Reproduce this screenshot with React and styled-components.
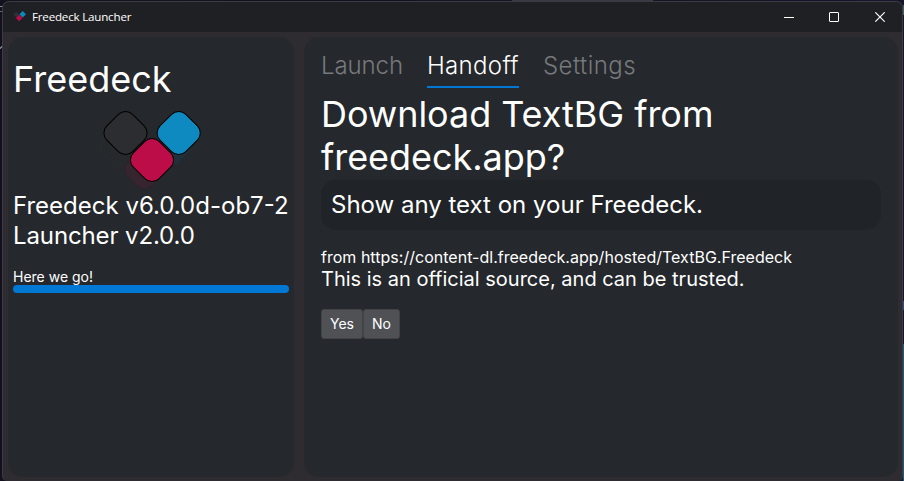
import React from "react";
import styled, { createGlobalStyle } from "styled-components";

const GlobalStyle = createGlobalStyle`
  *, *::before, *::after { box-sizing: border-box; }
  html, body { margin: 0; height: 100%; overflow: hidden; background: #15131f; }
  #root { height: 100%; }
`;

const Desktop = styled.div`
  width: 904px;
  height: 481px;
  padding: 1px 1px 0 2px;
  background:
    linear-gradient(#3a3a44, #3a3a44) 512px 0 / 141px 1px no-repeat,
    linear-gradient(#8d8c98, #8d8c98) 0 6px / 3px 1px no-repeat,
    linear-gradient(#6b6a76, #6b6a76) 0 11px / 3px 1px no-repeat,
    linear-gradient(135deg, transparent 40%, #77808c 40% 65%, transparent 65%) 0 45px / 3px 4px no-repeat,
    linear-gradient(#3e5f62, #3e5f62) 903px 5px / 1px 10px no-repeat,
    linear-gradient(#2f4a78, #2f4a78) 903px 301px / 1px 9px no-repeat,
    linear-gradient(#1c5a74, #1c5a74) 903px 344px / 1px 137px no-repeat,
    linear-gradient(90deg, #12111d 0, #17152a 100%);
`;

const Window = styled.div`
  display: flex;
  flex-direction: column;
  height: 480px;
  border: 1px solid #3c3b42;
  border-bottom-width: 0;
  border-radius: 7px 7px 5px 5px;
  overflow: hidden;
  background: #2e2c31;
  color: #fff;
  font-family: Inter, sans-serif;
`;

const TitleBar = styled.header`
  display: flex;
  align-items: center;
  flex: 0 0 30px;
  padding-left: 10px;
  background: #1f2023;
`;

const TitleText = styled.span`
  flex: 1;
  margin-left: 5px;
  font: 11.6px/16px "Open Sans", sans-serif;
  letter-spacing: -0.2px;
  white-space: nowrap;
`;

const WindowButton = styled.button`
  display: flex;
  align-items: center;
  justify-content: center;
  width: ${(p) => p.$width || 45}px;
  height: 30px;
  padding: 0;
  border: 0;
  background: none;
  color: #fff;
`;

const Body = styled.main`
  display: grid;
  grid-template-columns: 286px 594px;
  gap: 10px;
  padding: 5px 5px 0;
  height: 445px;
`;

const Panel = styled.section`
  display: flex;
  flex-direction: column;
  height: 440px;
  border-radius: 15px;
  background: #25282c;
  padding: ${(p) => p.$padding};
`;

const Heading = styled.h1`
  margin: ${(p) => p.$top || 0}px 0 0;
  font-size: 36px;
  line-height: 43px;
  font-weight: 400;
  letter-spacing: ${(p) => p.$tracking || 0}px;
`;

const Logo = styled.svg`
  display: block;
  margin: 5px 0 0 87px;
`;

const Versions = styled.div`
  margin-top: -1px;
  font-size: 24px;
  line-height: 30px;
  white-space: nowrap;
`;

const VersionLine = styled.div`
  letter-spacing: ${(p) => p.$tracking || 0}px;
`;

const Status = styled.div`
  margin-top: 17px;
  font-size: 14px;
  line-height: 17px;
`;

const Progress = styled.div`
  height: 8px;
  border-radius: 4px;
  background: #0078d4;
`;

const Tabs = styled.nav`
  display: flex;
  gap: 24px;
  height: 43px;
  margin-top: 8px;
`;

const Tab = styled.a`
  height: 43px;
  border-bottom: 2px solid ${(p) => (p.$active ? "#0078d4" : "transparent")};
  color: ${(p) => (p.$active ? "#fff" : "#77797c")};
  font-size: 24px;
  line-height: 41px;
  font-weight: 300;
  letter-spacing: ${(p) => p.$tracking || 0}px;
  white-space: nowrap;
`;

const Description = styled.div`
  height: 50px;
  margin-top: 1px;
  padding: 0 10px;
  border-radius: 15px;
  background: #202327;
  font-size: 24px;
  line-height: 50px;
`;

const Source = styled.div`
  margin-top: 17px;
  font-size: 16px;
  line-height: 20px;
  letter-spacing: 0.02px;
`;

const Trust = styled.div`
  font-size: 20px;
  line-height: 24px;
`;

const Actions = styled.div`
  display: flex;
  margin-top: 18px;
`;

const ActionButton = styled.button`
  width: ${(p) => p.$width}px;
  height: 30px;
  padding: 0;
  border: 1px solid #414347;
  border-radius: 3px;
  background: #505155;
  color: #fff;
  font: 14px/28px Inter, sans-serif;
`;

const Diamond = ({ x, y, half = 18.2, ...rest }) => (
  <rect x={x - half} y={y - half} width={half * 2} height={half * 2} rx="10"
    transform={`rotate(45 ${x} ${y})`} {...rest} />
);

const MiniLogo = () => (
  <svg width="14" height="14" viewBox="0 0 14 14">
    <path d="M3.3 1.8 6.1 4.6 3.3 7.4.5 4.6Z" fill="#303136" />
    <path d="M9.7 1.3 12.7 4.3 9.7 7.3 6.7 4.3Z" fill="#0f8ac0" stroke="#0f8ac0" strokeWidth=".5" />
    <path d="M6.2 4.9 9.2 7.9 6.2 10.9 3.2 7.9Z" fill="#bd0d49" stroke="#bd0d49" strokeWidth=".5" />
  </svg>
);

export default function App() {
  return (
    <>
      <GlobalStyle />
      <Desktop>
        <Window>
          <TitleBar>
            <MiniLogo />
            <TitleText>Freedeck Launcher</TitleText>
            <WindowButton aria-label="Minimize">
              <svg width="10" height="10"><path d="M0 5.5H10" stroke="currentColor" /></svg>
            </WindowButton>
            <WindowButton aria-label="Maximize">
              <svg width="10" height="10"><rect x=".5" y=".5" width="9" height="9" rx=".5" fill="none" stroke="currentColor" /></svg>
            </WindowButton>
            <WindowButton $width={46} aria-label="Close">
              <svg width="11" height="10" viewBox="-1 0 11 10"><path d="M.3.3 9.7 9.7M9.7.3.3 9.7" stroke="currentColor" strokeWidth="1.1" /></svg>
            </WindowButton>
          </TitleBar>
          <Body>
            <Panel $padding="21px 5px 0">
              <Heading>Freedeck</Heading>
              <Logo width="110" height="86" viewBox="0 0 110 86">
                <Diamond x={20.5} y={41} half={16.6} fill="#25292c" stroke="#2a2d30" />
                <Diamond x={73} y={39} half={16.6} fill="#202f39" />
                <Diamond x={44.3} y={63.5} half={16.8} fill="#36242f" stroke="#2d2029" strokeWidth=".6" />
                <Diamond x={25.5} y={27} fill="#2c2d30" stroke="#000" />
                <Diamond x={78.7} y={27} fill="#0f8ac0" stroke="#000" />
                <Diamond x={52} y={54} fill="#bd0d49" stroke="#000" />
              </Logo>
              <Versions>
                <VersionLine>Freedeck v6.0.0d-ob7-2</VersionLine>
                <VersionLine $tracking={-0.12}>Launcher v2.0.0</VersionLine>
              </Versions>
              <Status>Here we go!</Status>
              <Progress />
            </Panel>
            <Panel $padding="0 17px">
              <Tabs>
                <Tab $tracking={-0.1}>Launch</Tab>
                <Tab $active $tracking={0.35}>Handoff</Tab>
                <Tab $tracking={0.45}>Settings</Tab>
              </Tabs>
              <Heading as="h2" $top={5} $tracking={-0.05}>Download TextBG from<br />freedeck.app?</Heading>
              <Description>Show any text on your Freedeck.</Description>
              <Source>from https://content-dl.freedeck.app/hosted/TextBG.Freedeck</Source>
              <Trust>This is an official source, and can be trusted.</Trust>
              <Actions>
                <ActionButton $width={42}>Yes</ActionButton>
                <ActionButton $width={37}>No</ActionButton>
              </Actions>
            </Panel>
          </Body>
        </Window>
      </Desktop>
    </>
  );
}
